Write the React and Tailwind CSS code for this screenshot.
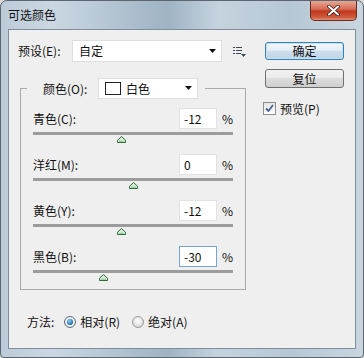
import React from "react";

const rows = [
  { label: "青色(C):", value: -12 },
  { label: "洋红(M):", value: 0 },
  { label: "黄色(Y):", value: -12 },
  { label: "黑色(B):", value: -30, focused: true },
];

function Arrow() {
  return (
    <svg width="8" height="5" viewBox="0 0 8 5">
      <path d="M0 0 H7 L3.5 4 Z" fill="#111" />
    </svg>
  );
}

function MenuIcon() {
  return (
    <svg width="13" height="12" viewBox="0 0 13 12">
      <rect x="0" y="1" width="2" height="1" fill="#3c4650" />
      <rect x="3" y="1" width="6" height="1" fill="#3c4650" />
      <rect x="0" y="4" width="2" height="1" fill="#3c4650" />
      <rect x="3" y="4" width="6" height="1" fill="#3c4650" />
      <rect x="0" y="7" width="2" height="1" fill="#3c4650" />
      <rect x="3" y="7" width="5" height="1" fill="#3c4650" />
      <path d="M8 8 H13 L10.5 11 Z" fill="#3c4650" />
    </svg>
  );
}

function Thumb() {
  return (
    <svg width="9" height="7" viewBox="0 0 9 7">
      <path d="M4.5 0.5 L8.5 4.2 V6.5 H0.5 V4.2 Z" fill="#d8ecd8" stroke="#2f6a3c" strokeWidth="1" />
      <path d="M2 5.2 H7" stroke="#8fc49a" strokeWidth="1" />
    </svg>
  );
}

function Slider({ value }) {
  return (
    <div className="relative mt-[3px] h-[3px] bg-[#9c9c9c]">
      <div
        className="absolute top-[4px] flex"
        style={{ left: `calc(${(value + 100) / 2}% - 4.5px)` }}
      >
        <Thumb />
      </div>
    </div>
  );
}

function Row({ label, value, focused }) {
  return (
    <div className="flex flex-col">
      <div className="flex h-[21px] items-center">
        <div className="flex-1">{label}</div>
        <div
          className={
            focused
              ? "flex h-[21px] w-[38px] items-center border border-[#7aa3cf] bg-white pl-[4px]"
              : "flex h-[21px] w-[38px] items-center border border-[#e2e2e2] bg-white pl-[4px]"
          }
        >
          {value}
        </div>
        <div className="ml-[5px] w-[11px]">%</div>
      </div>
      <Slider value={value} />
    </div>
  );
}

export default function App() {
  return (
    <div className="h-[358px] w-[364px] bg-[#d9d9d9] text-[12px] leading-none text-[#111] [font-family:'Noto_Sans_CJK_SC',sans-serif]">
      <div className="flex h-[358px] w-[364px] flex-col rounded-t-[7px] rounded-b-[4px] border border-[#5b6670] bg-[linear-gradient(90deg,#bccbd8_0%,#cbd8e3_14%,#b2c3d1_32%,#9fb3c3_46%,#c5d3de_60%,#b6c7d4_80%,#c9d6e0_100%)]">
        {/* title bar */}
        <div className="flex h-[28px] items-start justify-between">
          <div className="pl-[7px] pt-[8px] text-[12px] text-[#111]">可选颜色</div>
          <div className="mr-[6px] flex h-[20px] w-[47px] items-center justify-center rounded-b-[5px] border border-t-0 border-[#6e2a1f] bg-[linear-gradient(180deg,#e6a896_0%,#d7705a_40%,#c13a1e_55%,#cf5a3e_85%,#e09278_100%)]">
            <svg width="13" height="11" viewBox="0 0 13 11">
              <path d="M2 1.5 L11 9.5 M11 1.5 L2 9.5" stroke="#3a1a14" strokeWidth="3.6" strokeLinecap="round" />
              <path d="M2 1.5 L11 9.5 M11 1.5 L2 9.5" stroke="#ffffff" strokeWidth="2" strokeLinecap="round" />
            </svg>
          </div>
        </div>

        {/* client area */}
        <div className="mx-[7px] mb-[8px] flex flex-1 flex-col border border-[#7f8e9c] bg-[#efefef] pl-[9px] pt-[10px]">
          <div className="flex">
            {/* left column */}
            <div className="flex w-[228px] flex-col">
              <div className="flex items-center">
                <div className="w-[54px]">预设(E):</div>
                <div className="flex h-[22px] w-[150px] items-center justify-between border border-[#dedede] bg-white pl-[6px] pr-[4px]">
                  <span>自定</span>
                  <Arrow />
                </div>
                <div className="ml-[11px] mt-[2px] flex">
                  <MenuIcon />
                </div>
              </div>

              <fieldset className="ml-[2px] mt-[16px] h-[212px] w-[226px] border border-[#a9a9a9] px-[12px]">
                <legend className="ml-[-6px] flex items-center pl-[16px] pr-[7px]">
                  <span className="w-[55px]">颜色(O):</span>
                  <div className="flex h-[21px] w-[100px] items-center border border-[#dedede] bg-white pl-[6px] pr-[4px]">
                    <div className="h-[13px] w-[16px] border border-[#222] bg-white" />
                    <span className="ml-[5px] flex-1">白色</span>
                    <Arrow />
                  </div>
                </legend>
                <div className="mt-[9px] flex flex-col gap-[19px]">
                  {rows.map((r) => (
                    <Row key={r.label} {...r} />
                  ))}
                </div>
              </fieldset>
            </div>

            {/* right column */}
            <div className="ml-[19px] flex w-[79px] flex-col">
              <button className="mt-[2px] flex h-[18px] w-[79px] items-center justify-center rounded-[3px] border border-[#3c7fb1] bg-[linear-gradient(180deg,#f2f7fb_0%,#e5eef6_45%,#cfdfec_50%,#bfd4e6_100%)] shadow-[inset_0_0_0_1px_#bfe2f5]">
                确定
              </button>
              <button className="mt-[9px] flex h-[19px] w-[79px] items-center justify-center rounded-[3px] border border-[#707070] bg-[linear-gradient(180deg,#f2f2f2_0%,#ebebeb_45%,#dddddd_50%,#cfcfcf_100%)]">
                复位
              </button>
              <div className="mt-[14px] flex items-center">
                <div className="flex h-[13px] w-[13px] items-center justify-center border border-[#8e8f8f] bg-[linear-gradient(180deg,#e6e6e6,#ffffff)] ml-[-2px]">
                  <svg width="9" height="9" viewBox="0 0 9 9">
                    <path d="M1 4.5 L3.5 7 L8 1" stroke="#4a5f97" strokeWidth="1.8" fill="none" />
                  </svg>
                </div>
                <span className="ml-[4px]">预览(P)</span>
              </div>
            </div>
          </div>

          {/* method row */}
          <div className="ml-[9px] mt-[25px] flex h-[13px] items-center">
            <span>方法:</span>
            <div className="ml-[10px] flex h-[12px] w-[12px] items-center justify-center rounded-full border border-[#5d6a78] bg-[#e8eef3]">
              <div className="h-[6px] w-[6px] rounded-full bg-[radial-gradient(circle_at_40%_35%,#8ed0f2,#1d6aa5_70%,#124a7a)]" />
            </div>
            <span className="ml-[4px]">相对(R)</span>
            <div className="ml-[12px] flex h-[12px] w-[12px] rounded-full border border-[#9a9a9a] bg-[radial-gradient(circle_at_50%_40%,#ffffff,#e2e2e2_60%,#cdcdcd)]" />
            <span className="ml-[4px]">绝对(A)</span>
          </div>
        </div>
      </div>
    </div>
  );
}
